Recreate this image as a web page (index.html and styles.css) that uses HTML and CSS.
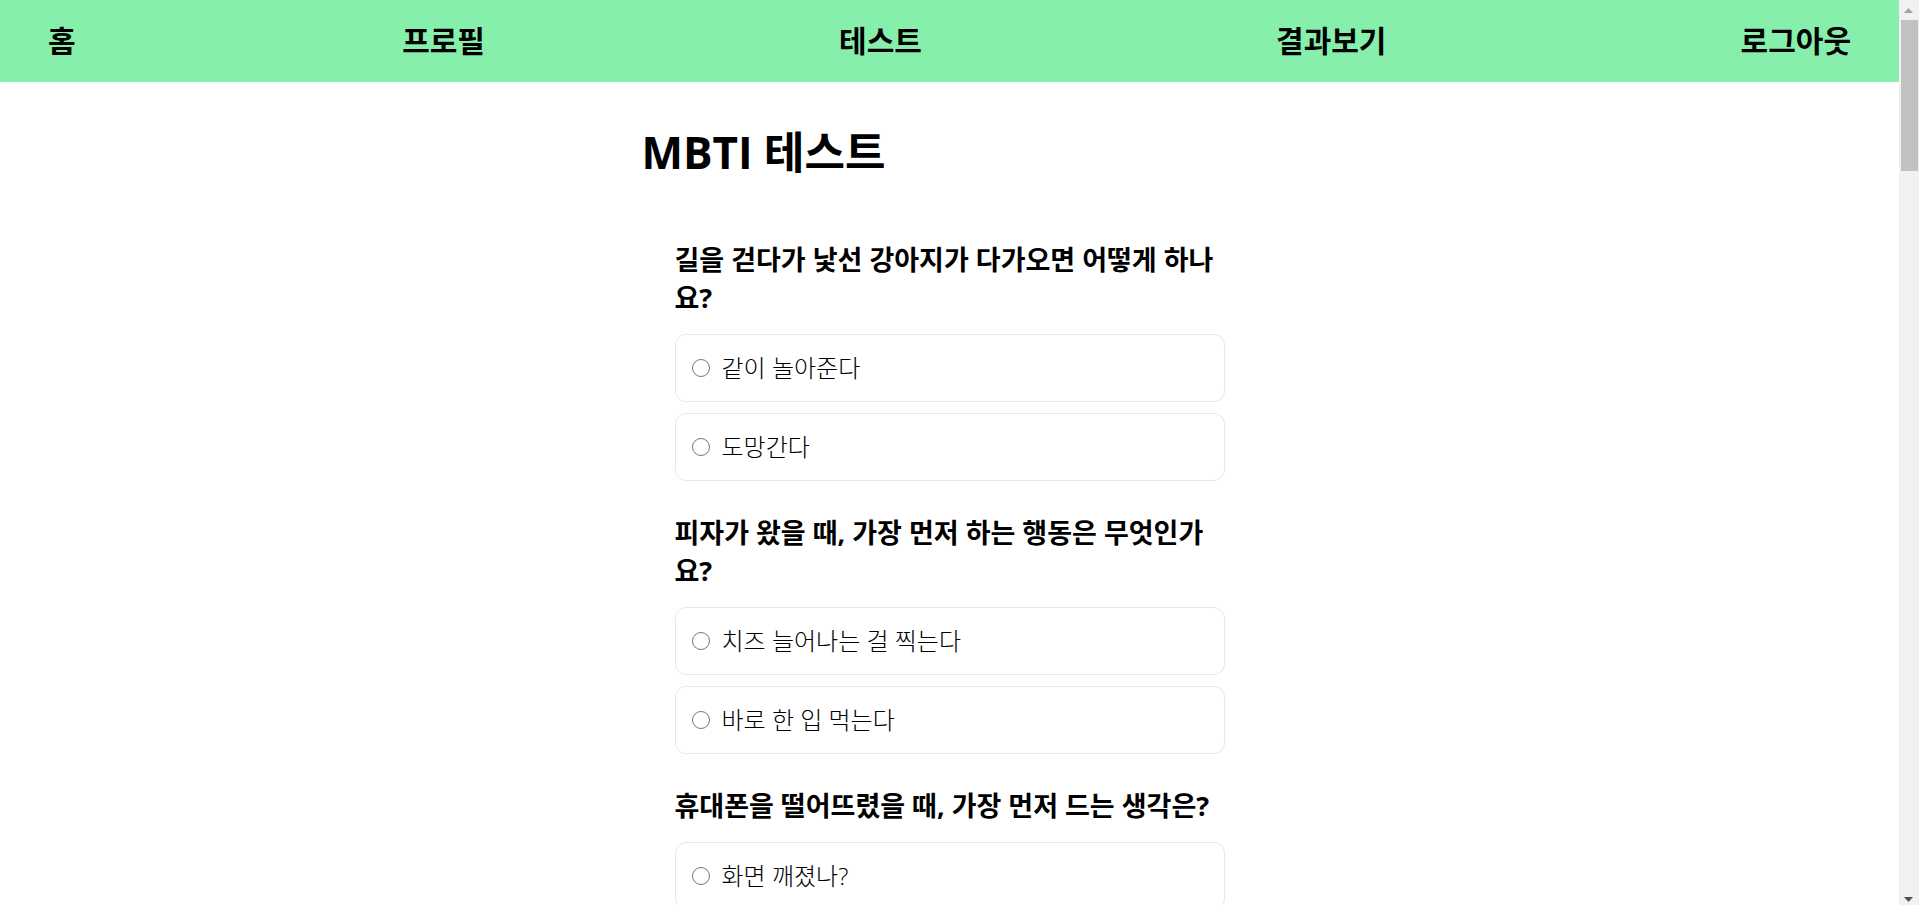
FILE: index.html
```html
<!DOCTYPE html>
<html lang="ko">
<head>
<meta charset="utf-8">
<meta name="viewport" content="width=device-width, initial-scale=1">
<title>MBTI 테스트</title>
<link rel="stylesheet" href="styles.css">
</head>
<body>
<div class="window">
  <div class="page">
    <nav class="nav">
      <a class="nav-link nav-home" href="#">홈</a>
      <a class="nav-link" href="#">프로필</a>
      <a class="nav-link" href="#">테스트</a>
      <a class="nav-link" href="#">결과보기</a>
      <a class="nav-link" href="#">로그아웃</a>
    </nav>
    <main class="content">
      <h1 class="title">MBTI 테스트</h1>
      <form class="form">
        <fieldset class="question">
          <legend class="question-text">길을 걷다가 낯선 강아지가 다가오면 어떻게 하나요?</legend>
          <label class="option"><input class="radio" type="radio" name="q1">같이 놀아준다</label>
          <label class="option"><input class="radio" type="radio" name="q1">도망간다</label>
        </fieldset>
        <fieldset class="question">
          <legend class="question-text">피자가 왔을 때, 가장 먼저 하는 행동은 무엇인가요?</legend>
          <label class="option"><input class="radio" type="radio" name="q2">치즈 늘어나는 걸 찍는다</label>
          <label class="option"><input class="radio" type="radio" name="q2">바로 한 입 먹는다</label>
        </fieldset>
        <fieldset class="question">
          <legend class="question-text">휴대폰을 떨어뜨렸을 때, 가장 먼저 드는 생각은?</legend>
          <label class="option"><input class="radio" type="radio" name="q3">화면 깨졌나?</label>
        </fieldset>
      </form>
    </main>
  </div>
  <div class="scrollbar" aria-hidden="true">
    <svg class="arrow" viewBox="0 0 20 20"><path d="M5 13L9.500 8L14 13Z" fill="#a3a3a3"/></svg>
    <div class="thumb"></div>
    <svg class="arrow arrow-down" viewBox="0 0 20 20"><path d="M5 12L9.500 17L14 12Z" fill="#505050"/></svg>
  </div>
</div>
</body>
</html>
```
FILE: styles.css
```css
* { box-sizing: border-box; }

body {
  margin: 0;
  color: #000;
  background: #fff;
  font-family: "Open Sans", "Noto Sans CJK KR", sans-serif;
  font-size: 24px;
  font-weight: 300;
  line-height: 38px;
}

.window {
  display: flex;
  height: 100vh;
  overflow: hidden;
}

.page {
  flex: 1;
  min-width: 0;
  overflow: hidden;
}

.nav {
  display: flex;
  justify-content: space-between;
  padding: 20px 48px;
  background: #86efac;
}

.nav-link {
  color: inherit;
  font-size: 30px;
  font-weight: 700;
  line-height: 42px;
  text-decoration: none;
  white-space: nowrap;
}

/* The home label takes no room when the links are spread out. */
.nav-home { width: 0; }

.content {
  max-width: 616px;
  margin: 0 auto;
  padding-top: 44px;
}

.title {
  margin: 0;
  font-size: 44px;
  font-weight: 700;
  line-height: 52px;
}

.form {
  display: flex;
  flex-direction: column;
  gap: 33px;
  padding: 63px 33px 0;
}

.question {
  display: flex;
  flex-direction: column;
  gap: 11px;
  min-width: 0;
  margin: 0;
  padding: 0;
  border: 0;
}

.question-text {
  padding: 0 0 17px;
  font-size: 27px;
  font-weight: 700;
}

.option {
  display: flex;
  align-items: center;
  gap: 12px;
  padding: 14px 16px;
  border: 1px solid #e5e7eb;
  border-radius: 11px;
}

.radio {
  width: 18px;
  height: 18px;
  margin: 0;
}

.scrollbar {
  display: flex;
  flex-direction: column;
  width: 20px;
  background: #f1f1f1;
}

.arrow {
  width: 20px;
  height: 20px;
}

.arrow-down { margin-top: auto; }

.thumb {
  height: 151px;
  margin: 0 1px 0 2px;
  background: #c1c1c1;
}
```
